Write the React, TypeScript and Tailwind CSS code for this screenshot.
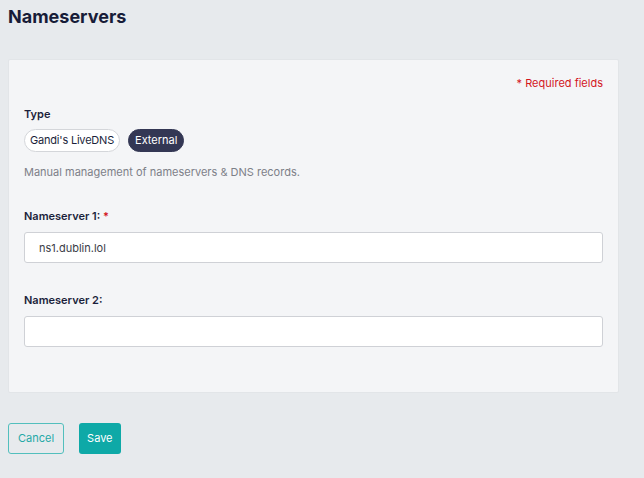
import { useState } from "react";

export default function App() {
    const [type, setType] = useState<"livedns" | "external">("external");
    const [ns1, setNs1] = useState("ns1.dublin.lol");
    const [ns2, setNs2] = useState("");

    const pill = (active: boolean) =>
        active
            ? "h-[23px] rounded-full border border-[#333754] bg-[#333754] px-[6px] text-[11px] text-white"
            : "h-[23px] rounded-full border border-[#d4d6da] bg-white px-[5px] text-[11px] tracking-[-0.2px] text-[#1b1f3b]";

    return (
        <div className="min-h-[478px] bg-[#e7eaed] px-2 pt-[5px] font-['Inter',sans-serif] text-[#1b1f3b]">
            <h1 className="text-[18px] font-bold leading-[24px] text-[#171c38]">Nameservers</h1>

            <div className="mt-[30px] w-[611px] rounded-[2px] border border-[#e2e5e8] bg-[#f4f5f7] px-[15px] pb-[45px] pt-[15px]">
                <p className="text-right text-[11px] leading-[16px] text-[#d3151d]">* Required fields</p>

                <div className="mt-[15px]">
                    <p className="text-[11px] font-semibold leading-[16px]">Type</p>
                    <div className="mt-[7px] flex gap-2">
                        <button onClick={() => setType("livedns")} className={pill(type === "livedns")}>
                            Gandi's LiveDNS
                        </button>
                        <button onClick={() => setType("external")} className={pill(type === "external")}>
                            External
                        </button>
                    </div>
                    <p className="mt-[12px] text-[11px] leading-[16px] text-[#7d8088]">
                        Manual management of nameservers &amp; DNS records.
                    </p>
                </div>

                <div className="mt-[28px]">
                    <label className="block text-[11px] font-semibold leading-[16px]">
                        Nameserver 1: <span className="text-[#d3151d]">*</span>
                    </label>
                    <input
                        value={ns1}
                        onChange={(e) => setNs1(e.target.value)}
                        className="mt-[8px] h-[31px] w-full rounded-[3px] border border-[#cfd1d6] bg-white px-[14px] text-[11px] text-[#3a3d47] outline-none"
                    />
                </div>

                <div className="mt-[29px]">
                    <label className="block text-[11px] font-semibold leading-[16px]">Nameserver 2:</label>
                    <input
                        value={ns2}
                        onChange={(e) => setNs2(e.target.value)}
                        className="mt-[8px] h-[31px] w-full rounded-[3px] border border-[#cfd1d6] bg-white px-[14px] text-[11px] text-[#3a3d47] outline-none"
                    />
                </div>
            </div>

            <div className="mt-[30px] flex gap-[15px]">
                <button className="h-[31px] rounded-[3px] border border-[#52bfbd] px-[9px] text-[11px] text-[#24a9a7]">
                    Cancel
                </button>
                <button className="h-[31px] rounded-[3px] bg-[#0ea9a7] px-[8px] text-[11px] text-white">
                    Save
                </button>
            </div>
        </div>
    );
}
